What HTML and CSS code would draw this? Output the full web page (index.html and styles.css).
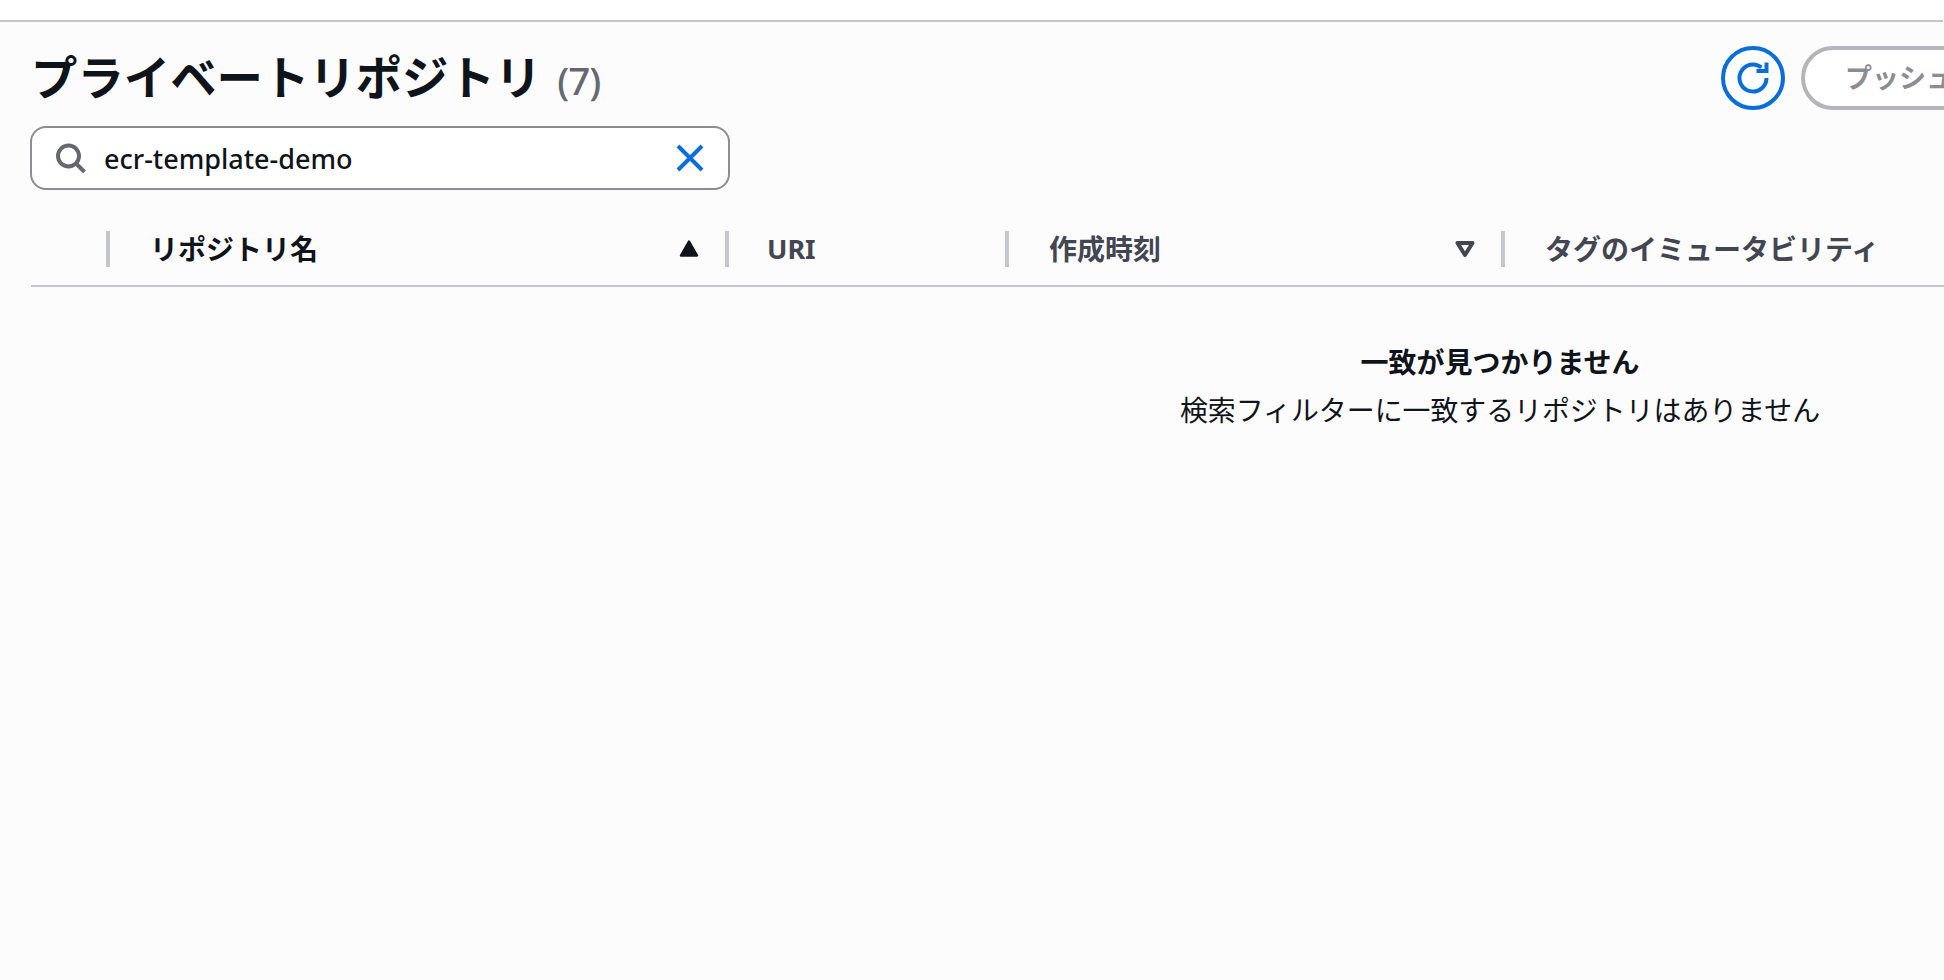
FILE: index.html
```html
<!DOCTYPE html>
<html lang="ja">
<head>
<meta charset="utf-8">
<title>プライベートリポジトリ</title>
<link rel="stylesheet" href="styles.css">
</head>
<body>
<div class="topbar"></div>
<main class="page">
  <header class="title-row">
    <h1 class="title">プライベートリポジトリ<span class="count">(7)</span></h1>
    <div class="actions">
      <button class="refresh" aria-label="更新">
        <svg viewBox="0 0 32 32" width="32" height="32"><path class="refresh-arc" d="M29.5 16A13.5 13.5 0 1 1 24.5 5.5"/><path class="refresh-head" d="M19.5 11H31.5V0.5H27.5V7H19.5Z"/></svg>
      </button>
      <button class="push">プッシュコマンドを表示</button>
    </div>
  </header>
  <div class="search">
    <svg class="search-icon" viewBox="0 0 30 30" width="30" height="30"><circle cx="12.5" cy="13" r="10.5"/><path d="M20 20.5L28.5 29"/></svg>
    <span class="search-text">ecr-template-demo</span>
    <svg class="clear-icon" viewBox="0 0 30 30" width="30" height="30"><path d="M3 3L27 27M27 3L3 27"/></svg>
  </div>
  <div class="table-head">
    <div class="col col-check"></div>
    <div class="col col-name sorted"><span>リポジトリ名</span><svg class="sort" viewBox="0 0 22 18" width="22" height="18"><path class="sort-fill" d="M11 1.5L19 15.5H3Z"/></svg></div>
    <div class="col col-uri"><span>URI</span></div>
    <div class="col col-time"><span>作成時刻</span><svg class="sort" viewBox="0 0 22 18" width="22" height="18"><path class="sort-line" d="M3.5 3H18.5L11 15Z"/></svg></div>
    <div class="col col-tag"><span>タグのイミュータビリティ</span></div>
  </div>
  <div class="empty">
    <div class="empty-title">一致が見つかりません</div>
    <div class="empty-text">検索フィルターに一致するリポジトリはありません</div>
  </div>
</main>
</body>
</html>
```
FILE: styles.css
```css
* { box-sizing: border-box; }
html, body { margin: 0; height: 100%; overflow: hidden; }
body {
  background: #fcfcfd;
  color: #0f141a;
  font-family: "Noto Sans", "Noto Sans CJK JP", sans-serif;
}
.topbar {
  height: 22px;
  background: #fff;
  border-bottom: 2px solid #c6c6cd;
  margin-right: 1px;
}
.page { width: 2938px; margin-left: 31px; }
.title-row {
  width: 1913px;
  height: 104px;
  padding-top: 24px;
  display: flex;
  justify-content: space-between;
  align-items: flex-start;
}
.title {
  margin: -1px 0 0;
  font-size: 46.4px;
  line-height: 64px;
  font-weight: 700;
  white-space: nowrap;
}
.count {
  margin-left: 16px;
  color: #656871;
  font-size: 38.5px;
  font-weight: 500;
  letter-spacing: -1px;
}
.actions { width: 223px; display: flex; gap: 16px; }
.refresh {
  flex: none;
  width: 64px;
  height: 64px;
  padding: 0;
  border: 4px solid #0a6ed9;
  border-radius: 50%;
  background: #fff;
  display: flex;
  align-items: center;
  justify-content: center;
}
.refresh-arc { fill: none; stroke: #0a6ed9; stroke-width: 4; }
.refresh-head { fill: #0a6ed9; }
.push {
  flex: none;
  height: 64px;
  padding: 0 40px 3px;
  border: 4px solid #b4b4bb;
  border-radius: 32px;
  background: #fff;
  color: #8c8c94;
  font: 700 27px "Noto Sans CJK JP", sans-serif;
  white-space: nowrap;
}
.search {
  width: 700px;
  height: 64px;
  margin-left: -1px;
  border: 2px solid #8c8c94;
  border-radius: 16px;
  background: #fff;
  display: flex;
  align-items: center;
  padding: 0 23px 0 24px;
}
.search-icon { fill: none; stroke: #656871; stroke-width: 4; flex: none; }
.search-text { flex: 1; margin-left: 18px; font-size: 27px; font-weight: 500; }
.clear-icon { fill: none; stroke: #0a6ed9; stroke-width: 4; flex: none; }
.table-head {
  margin-top: 29px;
  height: 68px;
  border-bottom: 2px solid #c6c6cd;
  display: grid;
  grid-template-columns: 75px 619px 280px 496px 1fr;
  color: #424650;
  font-size: 28px;
  font-weight: 700;
}
.col {
  height: 36px;
  margin-top: 12px;
  padding: 0 25px 2px 40px;
  border-left: 4px solid #c6c6cd;
  display: flex;
  align-items: center;
  justify-content: space-between;
  white-space: nowrap;
}
.col-check { border-left: 0; }
.col-uri { padding-left: 38px; font-size: 27px; }
.sorted { color: #0f141a; }
.sort { margin-top: 2px; }
.sort-fill { fill: #0f141a; stroke: #0f141a; stroke-width: 2.5; stroke-linejoin: round; }
.sort-line { fill: none; stroke: #424650; stroke-width: 4; stroke-linejoin: round; }
.empty { padding-top: 51px; text-align: center; line-height: 48px; font-size: 28px; }
.empty-title { font-weight: 700; }
.empty-text { font-size: 27.9px; }
```
